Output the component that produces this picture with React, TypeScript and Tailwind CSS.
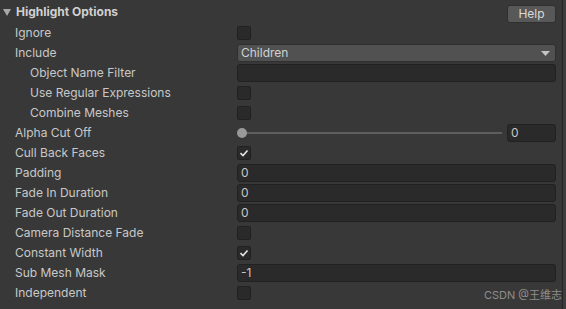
import React from "react";

type Row =
    | { label: string; indent?: boolean; kind: "check"; checked?: boolean }
    | { label: string; indent?: boolean; kind: "text"; value: string }
    | { label: string; indent?: boolean; kind: "dropdown"; value: string }
    | { label: string; indent?: boolean; kind: "slider"; value: string };

const rows: Row[] = [
    { label: "Ignore", kind: "check" },
    { label: "Include", kind: "dropdown", value: "Children" },
    { label: "Object Name Filter", indent: true, kind: "text", value: "" },
    { label: "Use Regular Expressions", indent: true, kind: "check" },
    { label: "Combine Meshes", indent: true, kind: "check" },
    { label: "Alpha Cut Off", kind: "slider", value: "0" },
    { label: "Cull Back Faces", kind: "check", checked: true },
    { label: "Padding", kind: "text", value: "0" },
    { label: "Fade In Duration", kind: "text", value: "0" },
    { label: "Fade Out Duration", kind: "text", value: "0" },
    { label: "Camera Distance Fade", kind: "check" },
    { label: "Constant Width", kind: "check", checked: true },
    { label: "Sub Mesh Mask", kind: "text", value: "-1" },
    { label: "Independent", kind: "check" },
];

const Checkbox = ({ checked }: { checked?: boolean }) => (
    <div className="w-[14px] h-[14px] rounded-[2px] bg-[#2a2a2a] border border-[#212121] flex items-center justify-center">
        {checked && (
            <svg width="10" height="10" viewBox="0 0 10 10">
                <polyline points="1.5,5.2 4,7.5 8.5,2.5" fill="none" stroke="#e6e6e6" strokeWidth="1.6" />
            </svg>
        )}
    </div>
);

const TextField = ({ value, className = "" }: { value: string; className?: string }) => (
    <div className={`h-[18px] rounded-[3px] bg-[#2a2a2a] border border-[#212121] pl-[3px] flex items-center text-[12px] text-[#c8c8c8] ${className}`}>
        {value}
    </div>
);

const Field = ({ row }: { row: Row }) => {
    switch (row.kind) {
        case "check":
            return <Checkbox checked={row.checked} />;
        case "text":
            return <TextField value={row.value} className="w-full" />;
        case "dropdown":
            return (
                <div className="w-full h-[18px] rounded-[3px] bg-[#515151] border border-[#303030] pl-[3px] pr-[5px] flex items-center justify-between text-[12px] text-[#d2d2d2]">
                    <span>{row.value}</span>
                    <svg width="9" height="5" viewBox="0 0 9 5">
                        <polygon points="0,0 9,0 4.5,5" fill="#c4c4c4" />
                    </svg>
                </div>
            );
        case "slider":
            return (
                <div className="w-full flex items-center">
                    <div className="relative flex-1 h-[18px] flex items-center">
                        <div className="w-full h-[2px] bg-[#5e5e5e] ml-[5px]" />
                        <div className="absolute left-0 w-[10px] h-[10px] rounded-full bg-[#999999]" />
                    </div>
                    <TextField value={row.value} className="w-[49px] ml-[5px]" />
                </div>
            );
    }
};

export default function App() {
    return (
        <div
            className="relative w-[566px] h-[309px] bg-[#383838] flex overflow-hidden"
            style={{ fontFamily: "Inter, 'Noto Sans', 'Noto Sans CJK SC', sans-serif" }}
        >
            <div className="flex-1 flex flex-col">
                <div className="h-[23px] flex items-start">
                    <div className="flex items-center h-[23px] pl-[3px] flex-1">
                        <svg width="8" height="7" viewBox="0 0 8 7" className="mr-[5px] mt-[1px]">
                            <polygon points="0,0 8,0 4,7" fill="#a8a8a8" />
                        </svg>
                        <span className="text-[12px] font-bold text-[#d0d0d0]">Highlight Options</span>
                    </div>
                    <div className="mt-[5px] mr-[6px] w-[49px] h-[18px] rounded-[3px] bg-[#585858] border border-[#303030] flex items-center justify-center text-[12px] text-[#dadada]">
                        Help
                    </div>
                </div>
                {rows.map((row) => (
                    <div key={row.label} className="h-[20px] flex items-center">
                        <div
                            className={`w-[237px] shrink-0 text-[12px] text-[#c8c8c8] ${row.indent ? "pl-[30px]" : "pl-[15px]"}`}
                        >
                            {row.label}
                        </div>
                        <div className="flex-1 mr-[6px] flex items-center">
                            <Field row={row} />
                        </div>
                    </div>
                ))}
            </div>
            <div className="w-[1px] bg-[#262626]" />
            <div className="w-[3px] bg-[#3e3e3e]" />
            <div className="absolute right-[4px] bottom-[8px] text-[11px] text-[#8e8e8e] leading-none">
                CSDN @王维志
            </div>
        </div>
    );
}
